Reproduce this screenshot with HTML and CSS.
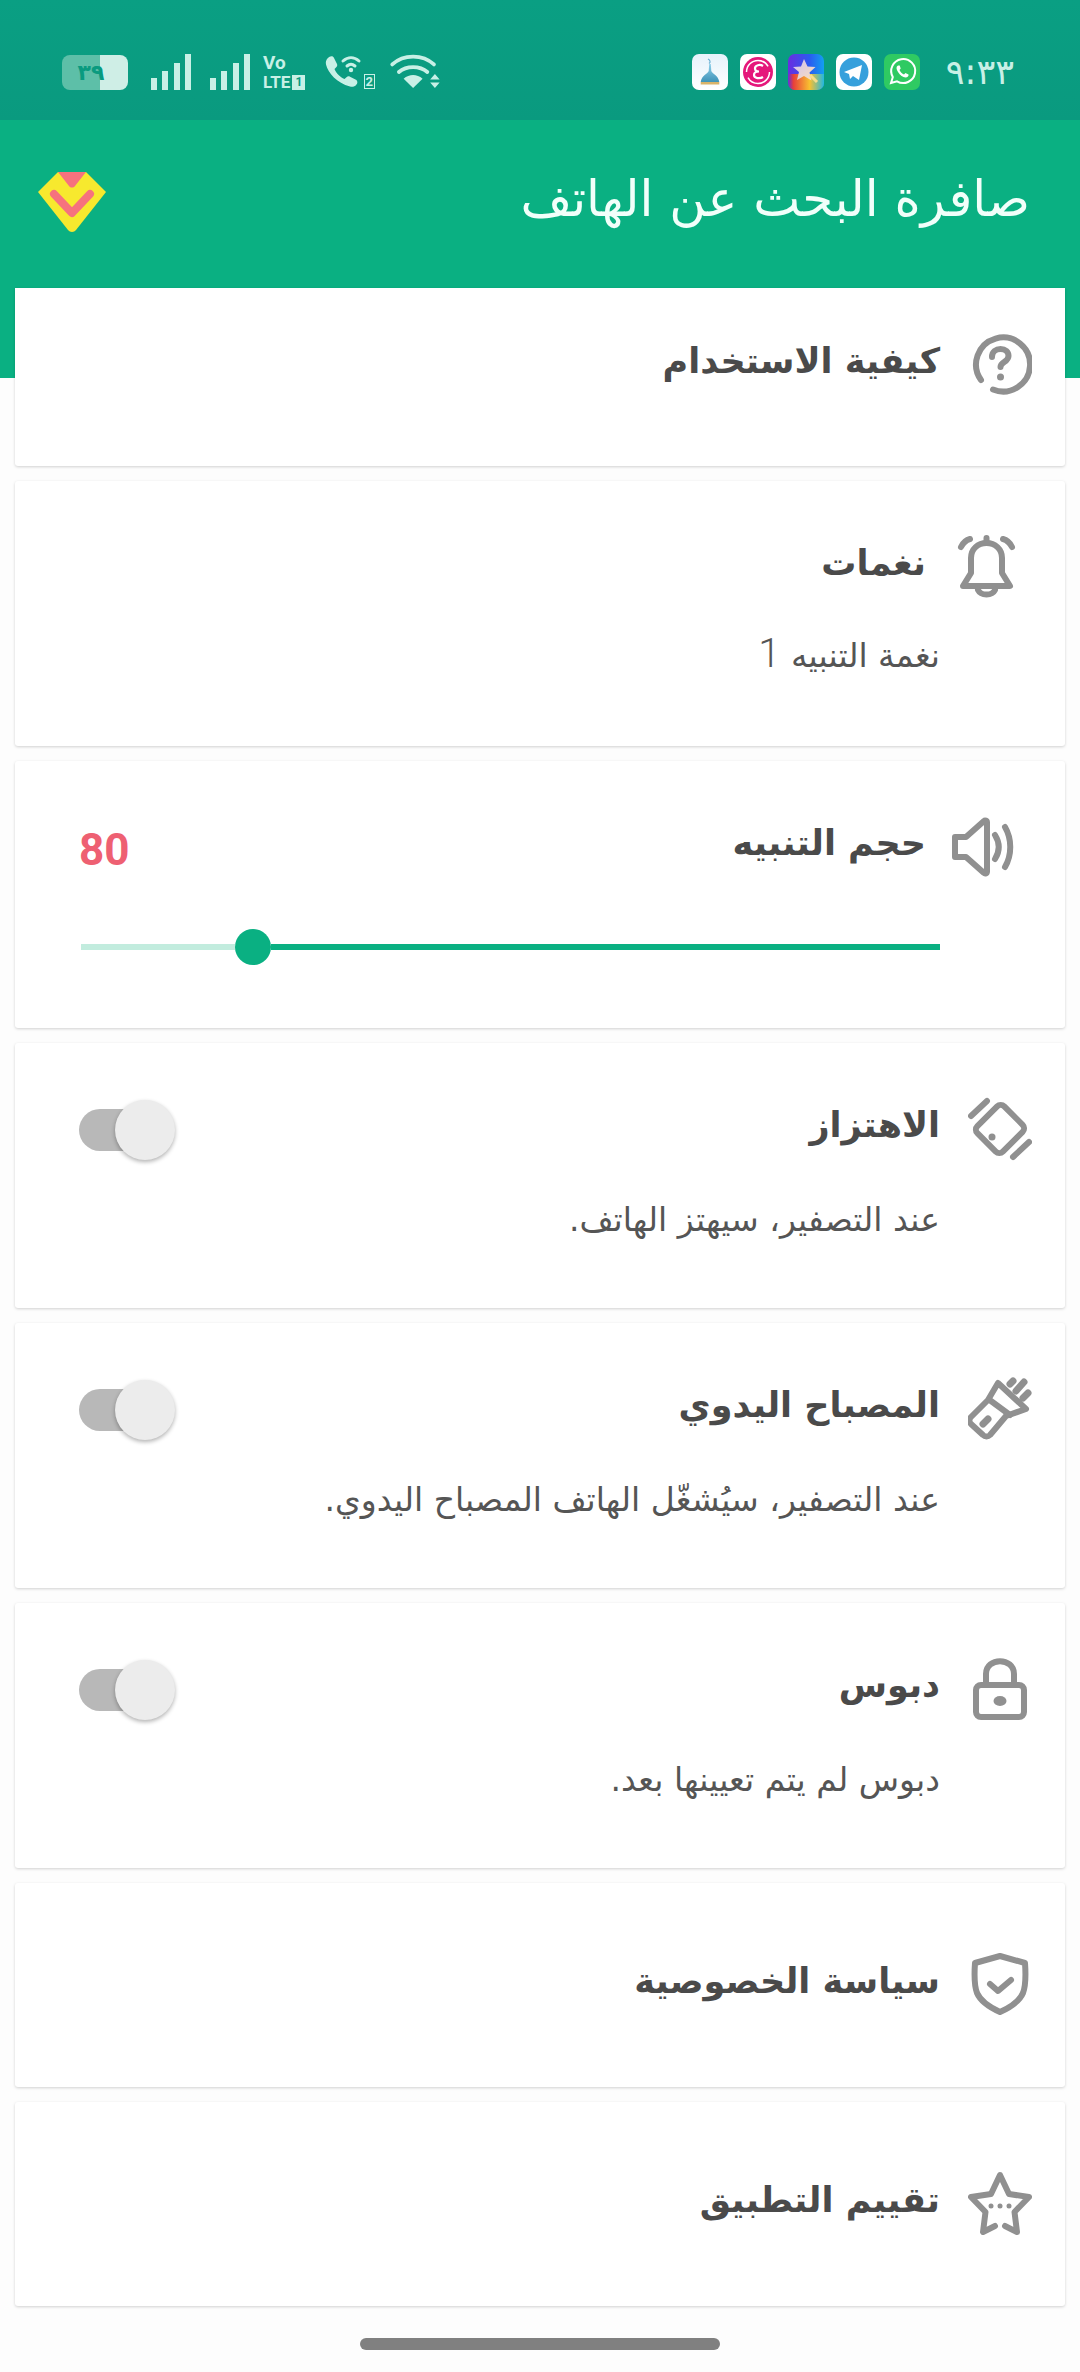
FILE: index.html
```html
<!DOCTYPE html>
<html lang="ar" dir="rtl">
<head>
    <meta charset="UTF-8">
    <meta name="viewport" content="width=device-width, initial-scale=1.0">
    <title>صافرة البحث عن الهاتف</title>
    <link rel="stylesheet" href="styles.css">
</head>
<body>
    <div class="status-bar">
        <div class="status-group">
            <div class="battery"><span class="battery-text">٣٩</span></div>
            <svg class="signal" viewBox="0 0 42 36"><path d="M1 24h6v12H1zM12 17h6v19h-6zM24 9h6v27h-6zM35 0h6v36h-6z"/></svg>
            <svg class="signal" viewBox="0 0 42 36"><path d="M1 24h6v12H1zM12 17h6v19h-6zM24 9h6v27h-6zM35 0h6v36h-6z"/></svg>
            <div class="volte"><span class="volte-top">Vo</span><span class="volte-bottom">LTE<i class="volte-box">1</i></span></div>
            <div class="call">
                <svg viewBox="0 0 50 36" class="call-icon">
                    <path class="fill" d="M2 5c2-3 6-4 7-1l3 6c.6 1.400 0 2.600-1 3.500l-1.500 1.500c1.500 4 5.500 8 10 10l2-1.800c1-1 2.300-1.200 3.500-.5l6 3c1.800 1.200 1.800 3.500.3 5-1.500 1.800-3.800 2.500-6.300 1.800C12 29 3 19 1 10.500.6 8 1 6.500 2 5z"/>
                    <path class="line line-thin" d="M18 7c5-4.500 11-4.500 16 0M22 12c3-2.500 5-2.500 8 0"/>
                    <circle class="fill" cx="26" cy="16" r="2.200"/>
                </svg>
                <span class="call-sim">2</span>
            </div>
            <svg class="wifi" viewBox="0 0 52 38">
                <path class="line" d="M2 11c12-11 32-11 44 0M9 19c8-7 22-7 30 0"/>
                <path class="fill" d="M24 36l-10-10c6-5 14-5 20 0z"/>
                <path class="fill" d="M42 27l5-6 5 6zM42 30h10l-5 6z"/>
            </svg>
        </div>
        <div class="status-group">
            <svg class="app-icon" viewBox="0 0 36 36">
                <defs>
                    <linearGradient id="sky" x1="0" y1="0" x2="0" y2="1"><stop offset="0" stop-color="#e6f2fb"/><stop offset="1" stop-color="#ffffff"/></linearGradient>
                    <linearGradient id="dome" x1="0" y1="0" x2="0" y2="1"><stop offset="0" stop-color="#8fd0ea"/><stop offset="1" stop-color="#3f93b8"/></linearGradient>
                </defs>
                <rect width="36" height="36" rx="7" fill="url(#sky)"/>
                <path d="M16 5c2 1 3 3 1 4.500" fill="none" stroke="#6fb2d4" stroke-width="1.200"/>
                <path d="M17.200 10h1.600l.5 7c1 3 7 4 8 11H8.700c1-7 7-8 8-11z" fill="url(#dome)"/>
                <rect x="8.700" y="28" width="18.600" height="2.500" fill="#d8b36a"/>
            </svg>
            <svg class="app-icon" viewBox="0 0 36 36">
                <rect width="36" height="36" rx="7" fill="#fff"/>
                <circle cx="18" cy="18" r="15" fill="#e5177b"/>
                <circle cx="18" cy="18" r="11.500" fill="none" stroke="#fff" stroke-width="1.500" stroke-dasharray="30 6"/>
                <path d="M23 12c-3-2-8-1-8 2.500 0 2 2 3 4 3-3 0-5 1-5 3.500 0 3.500 6 4 9 2" fill="none" stroke="#fff" stroke-width="2.200"/>
            </svg>
            <svg class="app-icon" viewBox="0 0 36 36">
                <defs>
                    <linearGradient id="spark" x1="0" y1="0" x2="1" y2="0"><stop offset="0" stop-color="#6a2de0"/><stop offset=".6" stop-color="#2a5cf0"/><stop offset="1" stop-color="#129ff0"/></linearGradient>
                    <linearGradient id="spark-low" x1="0" y1="0" x2="1" y2="0"><stop offset="0" stop-color="#e8303a" stop-opacity="0"/><stop offset=".15" stop-color="#e8403a"/><stop offset=".6" stop-color="#f8c030"/><stop offset="1" stop-color="#22b8e0"/></linearGradient>
                    <linearGradient id="star-fill" x1="0" y1="0" x2="1" y2="1"><stop offset="0" stop-color="#cfc0f4"/><stop offset="1" stop-color="#fbe0b8"/></linearGradient>
                </defs>
                <rect width="36" height="36" rx="7" fill="url(#spark)"/>
                <path d="M0 20h36v9a7 7 0 0 1-7 7H7a7 7 0 0 1-7-7z" fill="url(#spark-low)"/>
                <path d="M16 5l3.500 7.500 8 .5-6 5.500 2 8-7.500-4.500L9 26l2-8-6-5 8-.5z" fill="url(#star-fill)"/>
                <path d="M22 21l7 7" stroke="#f7dc8c" stroke-width="3"/>
            </svg>
            <svg class="app-icon" viewBox="0 0 36 36">
                <rect width="36" height="36" rx="7" fill="#fff"/>
                <circle cx="18" cy="18" r="14.500" fill="#36a0dc"/>
                <path d="M8 18l18-7-3 15-6-4-3 3-1-5z" fill="#fff"/>
            </svg>
            <svg class="app-icon" viewBox="0 0 36 36">
                <rect width="36" height="36" rx="7" fill="#2fca62"/>
                <path d="M7 29l1.800-6A12 12 0 1 1 13 27.300z" fill="none" stroke="#fff" stroke-width="2"/>
                <path d="M14 11.500c-2 1-2 3.500 0 6.500s5 5.500 7.500 5.500c2 0 3.500-1.500 3-3l-3-1.500-1.500 1.500c-2-.8-3.500-2.500-4.500-4.500l1.200-1.500-1-3z" fill="#fff"/>
            </svg>
            <span class="status-time">٩:٣٣</span>
        </div>
    </div>

    <header class="appbar">
        <h1 class="appbar-title">صافرة البحث عن الهاتف</h1>
        <svg class="appbar-logo" viewBox="0 0 68 60">
            <path d="M20 0h28l20 20-30 38c-2 2.500-6 2.500-8 0L0 20z" fill="#f7e92e"/>
            <path d="M20 0h28L37 14c-1.500 2-4.500 2-6 0z" fill="#f6727e"/>
            <path d="M16 22l18 19 18-19" fill="none" stroke="#f6727e" stroke-width="8" stroke-linecap="round" stroke-linejoin="round"/>
        </svg>
    </header>

    <main class="card-list">
        <section class="card card-first">
            <div class="card-icon">
                <svg viewBox="0 0 64 64"><path class="line" d="M13 48A27 27 0 1 1 25 57.500"/><path class="line" d="M24 25c0-5 4-8 8.500-8 5 0 8 3 8 7 0 6-8 6-8 11"/><circle class="fill" cx="32.500" cy="45" r="3.500"/></svg>
            </div>
            <div class="card-body">
                <h2 class="card-title">كيفية الاستخدام</h2>
            </div>
        </section>

        <section class="card">
            <div class="card-icon card-icon-offset">
                <svg viewBox="0 0 64 64"><path class="line" d="M9 51L17 38V23C17 14 24 8 32.500 8S48 14 48 23V38L56 51Z"/><path class="line" d="M32.500 3V8M24 55c3 6 14 6 17 0M7 12C9 8 12 5 16 4M49 4C53 5 56 8 58 12"/></svg>
            </div>
            <div class="card-body">
                <h2 class="card-title card-title-inset">نغمات</h2>
                <p class="card-sub">نغمة التنبيه <span class="card-digit">1</span></p>
            </div>
        </section>

        <section class="card card-slider">
            <div class="card-icon card-icon-far">
                <svg viewBox="0 0 64 64"><path class="line" d="M4 22h11L33 6c1-1 3-.5 3 1.500v49c0 2-2 2.500-3 1.500L15 42H4z"/><path class="line" d="M44 20c5 8 5 16 0 24M54 12c7 12 7 28 0 40"/></svg>
            </div>
            <div class="card-body">
                <div class="card-head">
                    <h2 class="card-title card-title-inset">حجم التنبيه</h2>
                    <span class="volume-value">80</span>
                </div>
                <div class="slider">
                    <span class="slider-on"></span>
                    <span class="slider-thumb"></span>
                    <span class="slider-off"></span>
                </div>
            </div>
        </section>

        <section class="card">
            <div class="card-icon">
                <svg viewBox="0 0 64 64"><rect class="line" x="14" y="13" width="36" height="38" rx="5" transform="rotate(45 32 32)"/><circle class="fill" cx="24" cy="40" r="3.500"/><path class="line" d="M3 19L19 4M45 60l16-15"/></svg>
            </div>
            <div class="card-body">
                <div class="card-head">
                    <h2 class="card-title">الاهتزاز</h2>
                    <span class="toggle"></span>
                </div>
                <p class="card-sub">عند التصفير، سيهتز الهاتف.</p>
            </div>
        </section>

        <section class="card">
            <div class="card-icon">
                <svg viewBox="0 0 64 64"><path class="line" d="M30 6L58 32 38 39 22 58C20 60 17 60 15 58L3 47C1 45 1 42 3 40L20 23Z"/><path class="line" d="M23 24L42 38"/><path class="line line-thick" d="M15 47L20 42M45 4L42 7M56 5L48 14M60 16L55 21"/></svg>
            </div>
            <div class="card-body">
                <div class="card-head">
                    <h2 class="card-title">المصباح اليدوي</h2>
                    <span class="toggle"></span>
                </div>
                <p class="card-sub">عند التصفير، سيُشغّل الهاتف المصباح اليدوي.</p>
            </div>
        </section>

        <section class="card">
            <div class="card-icon">
                <svg viewBox="0 0 64 64"><rect class="line" x="8" y="28" width="48" height="32" rx="5"/><path class="line" d="M18 28V17c0-17 28-17 28 0v11"/><ellipse class="fill" cx="32" cy="44" rx="6.500" ry="5"/></svg>
            </div>
            <div class="card-body">
                <div class="card-head">
                    <h2 class="card-title">دبوس</h2>
                    <span class="toggle"></span>
                </div>
                <p class="card-sub">دبوس لم يتم تعيينها بعد.</p>
            </div>
        </section>

        <section class="card card-short">
            <div class="card-icon">
                <svg viewBox="0 0 64 64"><path class="line" d="M32 4l25 7c1 14 1 22-2 30-3 7-12 14-23 19C21 55 12 48 9 41 6 33 6 25 7 11z"/><path class="line" d="M22 32l8 7 13-11"/></svg>
            </div>
            <div class="card-body">
                <h2 class="card-title">سياسة الخصوصية</h2>
            </div>
        </section>

        <section class="card card-short">
            <div class="card-icon">
                <svg viewBox="0 0 64 64"><path class="line" d="M27 55l-12 6 2.500-20L3 26l20-3 9-19 9 19 20 3-14.500 15L49 61l-12-6"/><circle class="fill" cx="23" cy="35" r="2.500"/><circle class="fill" cx="32" cy="35" r="2.500"/><circle class="fill" cx="41" cy="35" r="2.500"/></svg>
            </div>
            <div class="card-body">
                <h2 class="card-title">تقييم التطبيق</h2>
            </div>
        </section>
    </main>

    <div class="home-bar"></div>
</body>
</html>
```

FILE: styles.css
```css
html, body {
    margin: 0;
    padding: 0;
}
body {
    width: 1080px;
    height: 2372px;
    overflow: hidden;
    background-color: #fdfdfd;
    font-family: "DejaVu Sans", Roboto, sans-serif;
}
.status-bar {
    direction: ltr;
    height: 120px;
    box-sizing: border-box;
    padding: 54px 66px 0 62px;
    display: flex;
    justify-content: space-between;
    align-items: flex-start;
    background: linear-gradient(#0a9f83, #0a9a7f);
    color: #c8f0e6;
}
.status-group {
    display: flex;
    align-items: center;
    height: 36px;
}
.status-group .fill {
    fill: #c8f0e6;
}
.status-group .line {
    fill: none;
    stroke: #c8f0e6;
    stroke-width: 4;
    stroke-linecap: round;
}
.status-group .line-thin {
    stroke-width: 3;
}
.battery {
    width: 66px;
    height: 35px;
    border-radius: 8px;
    background: linear-gradient(90deg, #5dbfa8 58%, #cfeee6 58%);
    display: flex;
    align-items: center;
    justify-content: center;
}
.battery-text {
    font-size: 22px;
    font-weight: bold;
    color: #0a9a7f;
    margin-right: 8px;
}
.signal {
    width: 42px;
    height: 36px;
    margin-left: 22px;
    fill: #c8f0e6;
}
.signal + .signal {
    margin-left: 17px;
}
.volte {
    width: 47px;
    margin-left: 12px;
    display: flex;
    flex-direction: column;
    font-family: Roboto, sans-serif;
    font-weight: bold;
}
.volte-top {
    font-size: 19px;
    line-height: 20px;
}
.volte-bottom {
    font-size: 17px;
    line-height: 18px;
    display: flex;
    align-items: center;
}
.volte-box {
    font-style: normal;
    font-size: 12px;
    line-height: 15px;
    background-color: #c8f0e6;
    color: #0a9a7f;
    padding: 0 3px;
    margin-left: 2px;
}
.call {
    position: relative;
    width: 50px;
    height: 36px;
    margin-left: 15px;
}
.call-icon {
    width: 50px;
    height: 36px;
}
.call-sim {
    position: absolute;
    right: 0;
    bottom: 1px;
    font-family: Roboto, sans-serif;
    font-size: 13px;
    font-weight: bold;
    line-height: 13px;
    padding: 0 1px;
    border: 1px solid #c8f0e6;
}
.wifi {
    width: 52px;
    height: 36px;
    margin-left: 14px;
}
.app-icon {
    width: 36px;
    height: 36px;
    margin-right: 12px;
}
.status-time {
    font-size: 35px;
    margin-left: 14px;
    line-height: 36px;
}
.appbar {
    height: 258px;
    margin-bottom: -90px;
    padding: 47px 50px 0 38px;
    box-sizing: border-box;
    display: flex;
    justify-content: space-between;
    align-items: flex-start;
    background-color: #0ab082;
}
.appbar-title {
    margin: 0;
    font-size: 50px;
    font-weight: normal;
    line-height: 64px;
    color: #f1fffa;
}
.appbar-logo {
    width: 68px;
    height: 60px;
    margin-top: 5px;
}
.card-list {
    position: relative;
    display: flex;
    flex-direction: column;
    gap: 15px;
    padding: 0 15px;
}
.card {
    height: 265px;
    box-sizing: border-box;
    background-color: #fff;
    border-radius: 3px;
    box-shadow: 0 1px 3px rgba(0, 0, 0, 0.18);
    display: flex;
    align-items: flex-start;
    padding: 0 30px 0 64px;
}
.card-first {
    height: 178px;
    border-radius: 0 0 3px 3px;
}
.card-first .card-icon {
    margin-top: 41px;
}
.card-first .card-title {
    margin-top: 51px;
}
.card-slider {
    height: 267px;
}
.card-short {
    height: 204px;
}
.card-short .card-icon {
    margin-top: 66px;
}
.card-short .card-title {
    margin-top: 76px;
}
.card-icon {
    flex: none;
    width: 70px;
    height: 70px;
    margin-top: 51px;
    margin-left: 25px;
    display: flex;
    align-items: center;
    justify-content: center;
}
.card-icon svg {
    width: 64px;
    height: 64px;
}
.card-icon-offset {
    position: relative;
    right: 14px;
}
.card-icon-far {
    position: relative;
    right: 17px;
}
.card-icon .line {
    fill: none;
    stroke: #909090;
    stroke-width: 6;
    stroke-linecap: round;
    stroke-linejoin: round;
}
.card-icon .line-thick {
    stroke-width: 7;
}
.card-icon .fill {
    fill: #909090;
}
.card-body {
    flex: 1;
    min-width: 0;
}
.card-head {
    display: flex;
    justify-content: space-between;
    align-items: flex-start;
}
.card-title {
    margin: 60px 0 0;
    font-size: 35px;
    font-weight: bold;
    line-height: 44px;
    color: #4a4a4a;
}
.card-title-inset {
    margin-right: 14px;
}
.card-sub {
    margin: 47px 0 0;
    font-size: 33px;
    font-weight: normal;
    line-height: 44px;
    color: #555;
}
.card-digit {
    font-family: Roboto, sans-serif;
    font-size: 40px;
    font-weight: 300;
}
.volume-value {
    margin-top: 63px;
    font-family: Roboto, sans-serif;
    font-size: 44px;
    font-weight: bold;
    line-height: 52px;
    color: #ee6072;
}
.slider {
    margin: 53px 0 0 2px;
    height: 36px;
    display: flex;
    align-items: center;
}
.slider-on {
    flex: 1;
    height: 6px;
    background-color: #0ab082;
}
.slider-thumb {
    width: 36px;
    height: 36px;
    border-radius: 50%;
    background-color: #0ab082;
}
.slider-off {
    width: 154px;
    height: 6px;
    background-color: #c2ecde;
}
.toggle {
    position: relative;
    width: 81px;
    height: 42px;
    margin-top: 66px;
    border-radius: 21px;
    background-color: #b8b8b8;
}
.toggle::after {
    content: "";
    position: absolute;
    top: -9px;
    left: 36px;
    width: 60px;
    height: 60px;
    border-radius: 50%;
    background-color: #ececec;
    box-shadow: 0 2px 4px rgba(0, 0, 0, 0.3);
}
.home-bar {
    width: 360px;
    height: 12px;
    margin: 32px auto 0;
    border-radius: 6px;
    background-color: #808080;
}
```
